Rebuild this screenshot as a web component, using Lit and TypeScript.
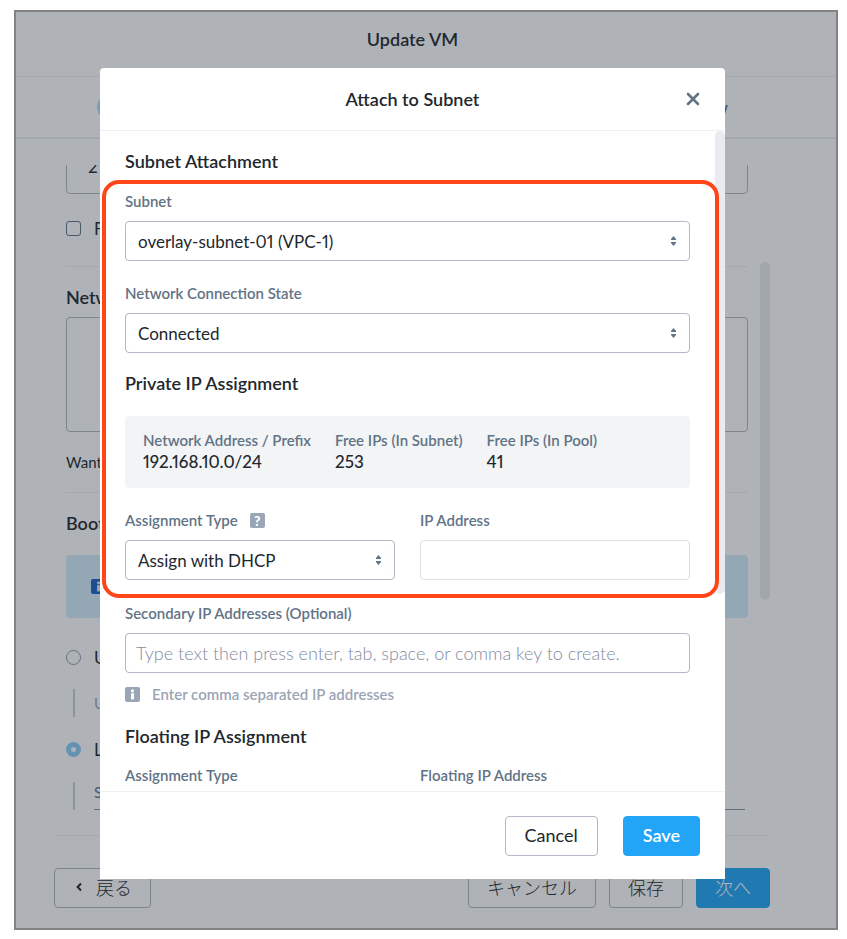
import { LitElement, html, css, svg } from "lit";
import { customElement, property } from "lit/decorators.js";

const shared = css`
  * {
    box-sizing: border-box;
  }
  h1,
  h2,
  h3,
  p,
  dl,
  dd,
  dt,
  ol {
    margin: 0;
    padding: 0;
    font-weight: inherit;
  }
  button,
  input,
  select,
  textarea {
    font: inherit;
    color: inherit;
    margin: 0;
  }
  .heading {
    font-size: 18px;
    line-height: 24px;
    font-weight: 600;
    color: #22272e;
  }
  .button {
    display: inline-flex;
    align-items: center;
    justify-content: center;
    height: 40px;
    padding: 0 18px 2px;
    border: 1px solid #b2b8c4;
    border-radius: 4px;
    background: #fff;
    color: #22272e;
    white-space: nowrap;
  }
  .primary {
    background: #22a5f7;
    border-color: #22a5f7;
    color: #fff;
  }
`;

const infoIcon = svg`<rect width="15" height="15" rx="2" fill="currentColor"/><circle cx="7.5" cy="3.8" r="1.6" fill="var(--mark, #fff)"/><path d="M6 6.2H9V12.4H6Z" fill="var(--mark, #fff)"/>`;

@customElement("vm-wizard")
class VmWizard extends LitElement {
  static styles = [
    shared,
    css`
      :host {
        display: block;
        color: #22272e;
      }
      .title {
        height: 65px;
        padding: 15px 27px 0 0;
        border-bottom: 1px solid #eef0f3;
        text-align: center;
      }
      .steps {
        display: flex;
        justify-content: space-between;
        align-items: center;
        list-style: none;
        height: 62px;
        padding: 0 108px 0 81px;
        border-bottom: 2px solid #eef0f3;
        color: #3b5674;
        font-size: 17px;
      }
      .dot {
        width: 24px;
        height: 24px;
        border-radius: 50%;
        background: #b5dcf5;
      }
      .main {
        padding: 26px 66px 0 38px;
      }
      .view {
        position: relative;
        overflow: hidden;
        padding: 0 22px 0 12px;
        border-bottom: 1px solid #eef0f3;
      }
      .thumb {
        position: absolute;
        right: 0;
        top: 97px;
        width: 10px;
        height: 338px;
        border-radius: 5px;
        background: #eaebf0;
      }
      .field {
        display: block;
        width: 100%;
        height: 56px;
        margin-top: -27px;
        padding: 0 21px;
        border: 1px solid #b2b8c4;
        border-radius: 4px;
        background: none;
        font-size: 17px;
      }
      .option {
        display: flex;
        align-items: center;
        gap: 13px;
        height: 24px;
        font-size: 17px;
      }
      .flag {
        margin-top: 22px;
      }
      .box,
      .radio {
        appearance: none;
        width: 15px;
        height: 15px;
        border: 1px solid #627386;
        border-radius: 3px;
      }
      .radio {
        border-color: #8c97a6;
        border-radius: 50%;
      }
      .radio:checked {
        border: 5px solid #8ccbf7;
        background: #fff;
      }
      .section {
        border-top: 1px solid #eef0f3;
        padding-top: 18px;
      }
      .first {
        margin-top: 26px;
      }
      .networks {
        height: 115px;
        margin-top: 8px;
        border: 1px solid #b2b8c4;
        border-radius: 4px;
      }
      .note {
        margin: 20px 0;
        font-size: 15px;
        line-height: 20px;
      }
      .alert {
        --mark: #d4ecfb;
        display: flex;
        align-items: center;
        height: 63px;
        margin: 20px 0 27px;
        padding: 0 25px;
        border-radius: 4px;
        background: #d4ecfb;
        color: #1b62c4;
      }
      .nested {
        display: grid;
        height: 28px;
        margin: 20px 3px 20px 7px;
        padding-left: 19px;
        border-left: 2px solid #c9cfdb;
        color: #627386;
        font-size: 15px;
        line-height: 20px;
      }
      .muted {
        align-content: center;
        color: #9aa5b5;
      }
      .priority {
        width: 100%;
        height: 28px;
        border: 0;
        border-bottom: 1px solid #8c97a6;
        background: none;
        appearance: none;
        padding: 0 0 8px;
      }
      .last {
        margin: 21px 3px 25px 7px;
      }
      .actions {
        display: flex;
        gap: 13px;
        padding: 32px 0 20px;
        font-family: Lato, "Noto Sans CJK JP", sans-serif;
        font-weight: 300;
        font-size: 18px;
      }
      .back {
        gap: 14px;
        margin-right: auto;
        padding-left: 21px;
      }
    `,
  ];

  render() {
    return html`
      <h1 class="title heading">Update VM</h1>
      <ol class="steps">
        <li class="dot"></li>
        <li class="dot"></li>
        <li class="dot"></li>
        <li>Review</li>
      </ol>
      <div class="main">
        <div class="view">
          <input class="field" aria-label="Memory" value="2" />
          <label class="option flag"><input class="box" type="checkbox" />Flash</label>
          <section class="section first">
            <h2 class="heading">Networks</h2>
            <div class="networks"></div>
            <p class="note">Want more?</p>
          </section>
          <section class="section">
            <h2 class="heading">Boot</h2>
            <div class="alert"><svg width="15" height="15" aria-hidden="true">${infoIcon}</svg></div>
            <label class="option"><input class="radio" type="radio" name="boot" />UEFI</label>
            <div class="nested muted">UEFI</div>
            <label class="option"><input class="radio" type="radio" name="boot" checked />Legacy</label>
            <div class="nested last">
              <select class="priority" aria-label="Set Boot Priority"><option>Set Boot Priority</option></select>
            </div>
          </section>
          <span class="thumb"></span>
        </div>
        <div class="actions">
          <button class="button back">
            <svg width="6" height="10" viewBox="0 0 6 10" aria-hidden="true">
              <path d="M5 1.5L1.6 5L5 8.5" fill="none" stroke="#22272e" stroke-width="2" />
            </svg>戻る
          </button>
          <button class="button">キャンセル</button>
          <button class="button">保存</button>
          <button class="button primary">次へ</button>
        </div>
      </div>
    `;
  }
}

@customElement("select-field")
class SelectField extends LitElement {
  @property() label = "";
  @property() value = "";
  @property({ type: Boolean }) help = false;

  static styles = [
    shared,
    css`
      :host {
        display: block;
      }
      .label {
        display: flex;
        align-items: center;
        gap: 12px;
        margin-bottom: 10px;
        font-size: 15px;
        line-height: 20px;
        font-weight: 600;
        color: #627386;
      }
      .help {
        display: grid;
        place-items: center;
        width: 15px;
        height: 15px;
        padding: 0;
        border: 0;
        border-radius: 2px;
        background: #9aa5b5;
        color: #fff;
        font-size: 14px;
        line-height: 15px;
        font-weight: 900;
      }
      .control {
        display: grid;
        grid-template-columns: 1fr 20px;
        align-items: center;
      }
      .select {
        grid-area: 1 / 1 / 2 / 3;
        width: 100%;
        height: 40px;
        padding: 0 30px 0 12px;
        border: 1px solid #b2b8c4;
        border-radius: 4px;
        background: #fff;
        appearance: none;
        font-size: 17px;
        font-variant-numeric: proportional-nums;
        color: #22272e;
      }
      .arrows {
        grid-area: 1 / 2;
        pointer-events: none;
      }
    `,
  ];

  render() {
    return html`
      <div class="label">
        <label for="control">${this.label}</label>
        ${this.help ? html`<button class="help" aria-label="Help">?</button>` : ""}
      </div>
      <div class="control">
        <select class="select" id="control"><option>${this.value}</option></select>
        <svg class="arrows" width="7" height="10" viewBox="0 0 7 10" aria-hidden="true">
          <path d="M1 4V3L3.5 0L6 3V4ZM1 6V7L3.5 10L6 7V6Z" fill="#627386" />
        </svg>
      </div>
    `;
  }
}

@customElement("subnet-dialog")
class SubnetDialog extends LitElement {
  static styles = [
    shared,
    css`
      :host {
        display: flex;
        flex-direction: column;
        overflow: hidden;
        border-radius: 4px 4px 0 0;
        background: #fff;
        color: #22272e;
      }
      .head {
        display: grid;
        grid-template-columns: 14px 1fr 14px;
        align-items: center;
        height: 63px;
        padding: 0 25px;
        border-bottom: 1px solid #eff1f3;
      }
      .title {
        grid-column: 2;
        text-align: center;
      }
      .close {
        display: grid;
        padding: 0;
        border: 0;
        background: none;
      }
      .view {
        position: relative;
        flex: 1 1 0;
        min-height: 0;
        display: flex;
        flex-direction: column;
      }
      .body {
        flex: 1 1 0;
        min-height: 0;
        overflow-y: auto;
        scrollbar-width: none;
        padding: 18px 35px 20px 25px;
      }
      .thumb {
        position: absolute;
        right: 0;
        top: 0;
        width: 10px;
        height: 463px;
        border-radius: 5px;
        background: #eaebf0;
      }
      .marked {
        position: relative;
        display: grid;
        gap: 22px;
        margin: 18px 0 23px;
      }
      .marked::after {
        content: "";
        position: absolute;
        inset: -11px -29px -18px -23px;
        border: 4px solid #ff4619;
        border-radius: 17px;
        pointer-events: none;
        z-index: 1;
      }
      .private {
        margin: -4px 0 21px;
      }
      .info {
        display: flex;
        gap: 24px;
        padding: 14px 18px;
        border-radius: 4px;
        background: #f2f4f6;
      }
      .info dd {
        font-size: 17px;
        line-height: 24px;
        font-weight: 500;
        font-variant-numeric: proportional-nums;
      }
      .label {
        display: block;
        font-size: 15px;
        line-height: 20px;
        font-weight: 600;
        color: #627386;
      }
      .pair {
        display: grid;
        grid-template-columns: 1fr 1fr;
        gap: 25px;
      }
      .input {
        display: block;
        width: 100%;
        height: 40px;
        margin-top: 10px;
        padding: 0 10px;
        border: 1px solid #b2b8c4;
        border-radius: 4px;
        background: #fff;
        font-size: 18px;
        font-weight: 300;
      }
      .input:disabled {
        border-color: #dcdfe4;
      }
      .input::placeholder {
        color: #7f8b9e;
      }
      .hint {
        display: flex;
        align-items: center;
        gap: 12px;
        margin: 11px 0 20px;
        color: #9aa5b5;
        font-size: 15px;
        line-height: 20px;
        font-weight: 600;
      }
      .floating {
        margin-bottom: 17px;
      }
      .foot {
        display: flex;
        justify-content: flex-end;
        gap: 25px;
        padding: 24px 25px 23px;
        border-top: 1px solid #eff1f3;
        font-size: 18px;
        font-weight: 400;
      }
      .foot .button {
        padding: 0 19px 2px;
      }
      .foot .primary {
        font-weight: 600;
      }
    `,
  ];

  render() {
    return html`
      <header class="head">
        <h2 class="title heading">Attach to Subnet</h2>
        <button class="close" aria-label="Close">
          <svg width="14" height="14" viewBox="0 0 14 14">
            <path d="M2 2L12 12M12 2L2 12" stroke="#627386" stroke-width="2.6" stroke-linecap="round" />
          </svg>
        </button>
      </header>
      <div class="view">
        <div class="body">
          <h3 class="heading">Subnet Attachment</h3>
          <div class="marked">
            <select-field label="Subnet" value="overlay-subnet-01 (VPC-1)"></select-field>
            <select-field label="Network Connection State" value="Connected"></select-field>
            <div>
              <h3 class="heading private">Private IP Assignment</h3>
              <dl class="info">
                <div><dt class="label">Network Address / Prefix</dt><dd>192.168.10.0/24</dd></div>
                <div><dt class="label">Free IPs (In Subnet)</dt><dd>253</dd></div>
                <div><dt class="label">Free IPs (In Pool)</dt><dd>41</dd></div>
              </dl>
            </div>
            <div class="pair">
              <select-field label="Assignment Type" value="Assign with DHCP" help></select-field>
              <div>
                <label class="label" for="ip">IP Address</label>
                <input class="input" id="ip" disabled />
              </div>
            </div>
          </div>
          <label class="label" for="secondary">Secondary IP Addresses (Optional)</label>
          <input
            class="input"
            id="secondary"
            placeholder="Type text then press enter, tab, space, or comma key to create."
          />
          <p class="hint">
            <svg width="15" height="15" aria-hidden="true">${infoIcon}</svg>Enter comma separated IP addresses
          </p>
          <h3 class="heading floating">Floating IP Assignment</h3>
          <div class="pair">
            <select-field label="Assignment Type"></select-field>
            <select-field label="Floating IP Address"></select-field>
          </div>
        </div>
        <span class="thumb"></span>
      </div>
      <footer class="foot">
        <button class="button">Cancel</button>
        <button class="button primary">Save</button>
      </footer>
    `;
  }
}

@customElement("app-root")
class AppRoot extends LitElement {
  static styles = [
    shared,
    css`
      :host {
        display: block;
        padding: 10px 9px 9px 14px;
        background: #fff;
        font-family: Lato, "Noto Sans CJK JP", sans-serif;
        font-size: 17px;
      }
      .frame {
        position: relative;
        border: 2px solid #828282;
      }
      .overlay {
        position: absolute;
        inset: 0;
        display: flex;
        justify-content: center;
        padding: 56px 27px 49px 0;
        background: rgba(34, 44, 56, 0.36);
      }
      .dialog {
        width: 625px;
        max-width: 100%;
      }
    `,
  ];

  render() {
    return html`
      <div class="frame">
        <vm-wizard></vm-wizard>
        <div class="overlay">
          <subnet-dialog class="dialog" role="dialog" aria-label="Attach to Subnet"></subnet-dialog>
        </div>
      </div>
    `;
  }
}
